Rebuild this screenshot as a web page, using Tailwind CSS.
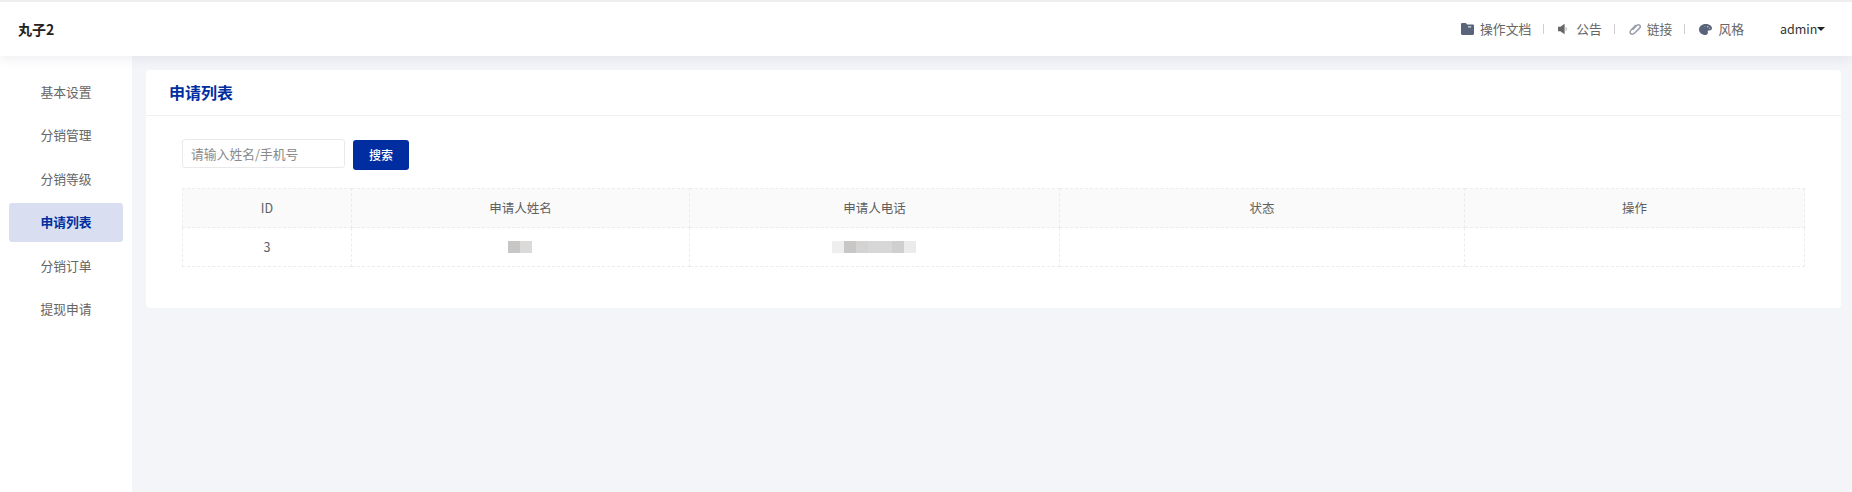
<!DOCTYPE html>
<html lang="zh-CN">
<head>
    <meta charset="UTF-8">
    <title>申请列表</title>
    <script src="https://cdn.jsdelivr.net/npm/@tailwindcss/browser@4"></script>
</head>
<body class="h-[492px] overflow-hidden bg-[#f4f5f9] font-['Noto_Sans_CJK_SC','Noto_Sans',sans-serif] text-[12.800px] text-[#666]">
    <header class="relative z-10 h-[56px] flex items-center justify-between bg-white border-t-2 border-[#eeeeee] pl-[18px] pr-[27px] shadow-[0_2px_12px_rgba(30,40,80,0.09)]">
        <div class="text-[14px] font-bold text-[#222]">丸子2</div>
        <div class="flex items-center text-[#666]">
            <a class="flex items-center gap-[6px]">
                <svg class="w-[13px] h-[12px]" viewBox="0 0 13 12"><path fill="#59637a" d="M0 1.2C0 .5.5 0 1.2 0h3.6l1.300 1.400h5.700c.7 0 1.200.5 1.200 1.200v8.200c0 .7-.5 1.200-1.200 1.200H1.200C.5 12 0 11.500 0 10.800z"/><rect x="7" y="3.400" width="3.200" height="1" fill="#fff"/></svg>
                操作文档
            </a>
            <span class="w-px h-[10px] bg-[#cfcfcf] ml-[12px] mr-[14px]"></span>
            <a class="flex items-center gap-[8px]">
                <svg class="w-[10px] h-[12px]" viewBox="0 0 10 12"><path fill="#666" d="M0 3.800h2.400L6.600.8v10.400L2.400 8.200H0z"/><path fill="#aaa" d="M7.600 3.800c1.600.8 1.600 3.600 0 4.400z"/></svg>
                公告
            </a>
            <span class="w-px h-[10px] bg-[#cfcfcf] ml-[12px] mr-[14px]"></span>
            <a class="flex items-center gap-[6px]">
                <svg class="w-[12px] h-[12px]" viewBox="0 0 12 12" fill="none" stroke="#9a9dab" stroke-width="1.500"><path d="M3.600 6.800 7.800 2.500c.9-.9 2.200-.9 2.900-.2.7.7.7 1.900-.2 2.800L5.400 10.200c-1.200 1.200-2.800 1.300-3.700.4-.9-.9-.8-2.400.4-3.600L7 2"/></svg>
                链接
            </a>
            <span class="w-px h-[10px] bg-[#cfcfcf] ml-[12px] mr-[14px]"></span>
            <a class="flex items-center gap-[6px]">
                <svg class="w-[13px] h-[11px]" viewBox="0 0 13 11"><path fill="#59637a" d="M6.500 0C10 0 13 1.800 13 4.300c0 1.600-1.500 2.300-3 2.200-1.100-.1-1.600.6-1.200 1.500.5 1.400-.5 3-2.300 3C2.900 11 0 8.500 0 5.500S2.900 0 6.500 0z"/><circle cx="8.800" cy="2.700" r=".8" fill="#c5c9d3"/><circle cx="10.800" cy="4.300" r=".6" fill="#c5c9d3"/><circle cx="5.800" cy="2.500" r=".6" fill="#8b93a5"/></svg>
                风格
            </a>
            <a class="flex items-center justify-between w-[45px] ml-[36px] text-[12.500px] text-[#333]">
                admin
                <span class="w-0 h-0 border-x-[4px] border-x-transparent border-t-[4px] border-t-[#222]"></span>
            </a>
        </div>
    </header>

    <div class="flex h-[436px]">
        <aside class="w-[132px] shrink-0 bg-white pt-[16.500px] px-[9px] text-center">
            <div class="h-[39px] mb-[4.600px] leading-[37px]">基本设置</div>
            <div class="h-[39px] mb-[4.600px] leading-[37px]">分销管理</div>
            <div class="h-[39px] mb-[4.600px] leading-[37px]">分销等级</div>
            <div class="h-[39px] mb-[4.600px] leading-[37px] rounded-[3px] bg-[#d9dff0] font-bold text-[#002da0]">申请列表</div>
            <div class="h-[39px] mb-[4.600px] leading-[37px]">分销订单</div>
            <div class="h-[39px] mb-[4.600px] leading-[37px]">提现申请</div>
        </aside>

        <main class="flex-1 pt-[14px] pl-[14px] pr-[11px]">
            <section class="h-[238px] rounded-[4px] bg-white">
                <h1 class="h-[46px] pl-[23px] leading-[45px] border-b border-[#f1f1f4] text-[16px] font-bold text-[#002da0]">申请列表</h1>
                <div class="pt-[23px] pl-[36px] pr-[36px]">
                    <form class="flex items-start gap-[8px]">
                        <input class="w-[163px] h-[29px] px-[8px] rounded-[3px] border border-[#e9e9ec] text-[12.800px] placeholder:text-[#8a8a8a] outline-none" placeholder="请输入姓名/手机号">
                        <button type="button" class="mt-px w-[56px] h-[30px] rounded-[3px] bg-[#002da0] font-medium text-white text-[12px]">搜索</button>
                    </form>
                    <table class="mt-[18px] w-[1622px] table-fixed border-collapse text-center text-[12.500px] text-[#5f5f5f]">
                        <colgroup>
                            <col class="w-[169px]"><col class="w-[338px]"><col class="w-[370px]"><col class="w-[405px]"><col class="w-[340px]">
                        </colgroup>
                        <thead class="bg-[#fafafa]">
                            <tr class="h-[39px]">
                                <th class="font-normal border border-dashed border-[#ececef]">ID</th>
                                <th class="font-normal border border-dashed border-[#ececef]">申请人姓名</th>
                                <th class="font-normal border border-dashed border-[#ececef]">申请人电话</th>
                                <th class="font-normal border border-dashed border-[#ececef]">状态</th>
                                <th class="font-normal border border-dashed border-[#ececef]">操作</th>
                            </tr>
                        </thead>
                        <tbody>
                            <tr class="h-[39px]">
                                <td class="border border-dashed border-[#ececef]">3</td>
                                <td class="border border-dashed border-[#ececef]">
                                    <div class="flex justify-center pr-[2px]">
                                        <span class="w-[12px] h-[12px] bg-[#c8c6c4]"></span><span class="w-[12px] h-[12px] bg-[#dadada]"></span>
                                    </div>
                                </td>
                                <td class="border border-dashed border-[#ececef]">
                                    <div class="flex justify-center pr-[2px]">
                                        <span class="w-[12px] h-[12px] bg-[#eeeeee]"></span><span class="w-[12px] h-[12px] bg-[#c9c7c5]"></span><span class="w-[12px] h-[12px] bg-[#d3d3d4]"></span><span class="w-[12px] h-[12px] bg-[#d7d7d7]"></span><span class="w-[12px] h-[12px] bg-[#d7d7d7]"></span><span class="w-[12px] h-[12px] bg-[#cfcfcf]"></span><span class="w-[12px] h-[12px] bg-[#ebebeb]"></span>
                                    </div>
                                </td>
                                <td class="border border-dashed border-[#ececef]"></td>
                                <td class="border border-dashed border-[#ececef]"></td>
                            </tr>
                        </tbody>
                    </table>
                </div>
            </section>
        </main>
    </div>
</body>
</html>
